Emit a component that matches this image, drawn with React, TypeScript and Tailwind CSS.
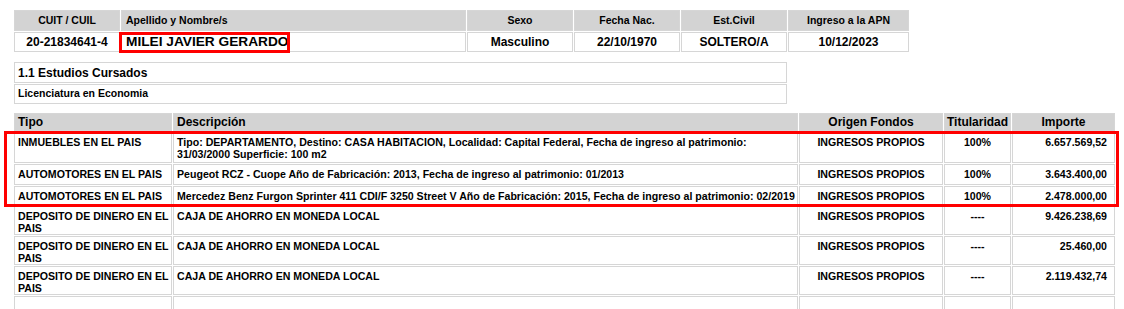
import React from "react";

const TH = "bg-[#d3d3d3] border border-[#d6d6d6] flex items-center";
const TD = "bg-white border border-[#d6d6d6]";

type Row = {
  tipo: React.ReactNode;
  desc: React.ReactNode;
  origen: string;
  tit: string;
  importe: string;
};

const rows: Row[] = [
  {
    tipo: "INMUEBLES EN EL PAIS",
    desc: (
      <>
        Tipo: DEPARTAMENTO, Destino: CASA HABITACION, Localidad: Capital Federal, Fecha de ingreso al patrimonio:
        <br />
        31/03/2000 Superficie: 100 m2
      </>
    ),
    origen: "INGRESOS PROPIOS",
    tit: "100%",
    importe: "6.657.569,52",
  },
  {
    tipo: "AUTOMOTORES EN EL PAIS",
    desc: "Peugeot RCZ - Cuope Año de Fabricación: 2013, Fecha de ingreso al patrimonio: 01/2013",
    origen: "INGRESOS PROPIOS",
    tit: "100%",
    importe: "3.643.400,00",
  },
  {
    tipo: "AUTOMOTORES EN EL PAIS",
    desc: "Mercedez Benz Furgon Sprinter 411 CDI/F 3250 Street V Año de Fabricación: 2015, Fecha de ingreso al patrimonio: 02/2019",
    origen: "INGRESOS PROPIOS",
    tit: "100%",
    importe: "2.478.000,00",
  },
  {
    tipo: (
      <>
        DEPOSITO DE DINERO EN EL
        <br />
        PAIS
      </>
    ),
    desc: "CAJA DE AHORRO EN MONEDA LOCAL",
    origen: "INGRESOS PROPIOS",
    tit: "----",
    importe: "9.426.238,69",
  },
  {
    tipo: (
      <>
        DEPOSITO DE DINERO EN EL
        <br />
        PAIS
      </>
    ),
    desc: "CAJA DE AHORRO EN MONEDA LOCAL",
    origen: "INGRESOS PROPIOS",
    tit: "----",
    importe: "25.460,00",
  },
  {
    tipo: (
      <>
        DEPOSITO DE DINERO EN EL
        <br />
        PAIS
      </>
    ),
    desc: "CAJA DE AHORRO EN MONEDA LOCAL",
    origen: "INGRESOS PROPIOS",
    tit: "----",
    importe: "2.119.432,74",
  },
];

export default function App() {
  const rc = "text-[10.6px] leading-[12px] pt-[3px] whitespace-nowrap";
  return (
    <div className="relative w-[1124px] h-[309px] overflow-hidden bg-white font-['Liberation_Sans',Arial,sans-serif] font-bold text-black">
      <div className="pl-[14px] pt-[10px] flex flex-col">
        {/* Top personal data table */}
        <div className="grid grid-cols-[106px_345px_106px_106px_106px_121px] grid-rows-[21px_20px] gap-[1px] w-[895px]">
          <div className={`${TH} justify-center text-[10.5px]`}>CUIT / CUIL</div>
          <div className={`${TH} pl-[4px] text-[10.5px]`}>Apellido y Nombre/s</div>
          <div className={`${TH} justify-center text-[10.5px]`}>Sexo</div>
          <div className={`${TH} justify-center text-[10.5px]`}>Fecha Nac.</div>
          <div className={`${TH} justify-center text-[10.5px]`}>Est.Civil</div>
          <div className={`${TH} justify-center text-[10.5px]`}>Ingreso a la APN</div>
          <div className={`${TD} flex items-center justify-center text-[12px]`}>20-21834641-4</div>
          <div className={`${TD} flex items-center pl-[4px] text-[13.7px]`}>MILEI JAVIER GERARDO</div>
          <div className={`${TD} flex items-center justify-center text-[12px]`}>Masculino</div>
          <div className={`${TD} flex items-center justify-center text-[12px]`}>22/10/1970</div>
          <div className={`${TD} flex items-center justify-center text-[12px]`}>SOLTERO/A</div>
          <div className={`${TD} flex items-center justify-center text-[12px]`}>10/12/2023</div>
        </div>

        {/* Studies */}
        <div className="mt-[10px] grid grid-rows-[21px_20px] gap-[1px] w-[773px]">
          <div className={`${TD} flex items-center pl-[3px] text-[12px]`}>1.1 Estudios Cursados</div>
          <div className={`${TD} flex items-center pl-[3px] pb-[1px] text-[10.5px]`}>Licenciatura en Economia</div>
        </div>

        {/* Assets table */}
        <div className="mt-[9px] grid grid-cols-[158px_625px_144px_67px_103px] grid-rows-[18px_31px_21px_19px_29px_29px_29px_20px] gap-[1px] w-[1101px]">
          <div className={`${TH} pl-[3px] text-[12px]`}>Tipo</div>
          <div className={`${TH} pl-[3px] text-[12px]`}>Descripción</div>
          <div className={`${TH} justify-center text-[12px]`}>Origen Fondos</div>
          <div className={`${TH} justify-center text-[12px]`}>Titularidad</div>
          <div className={`${TH} justify-center text-[12px]`}>Importe</div>
          {rows.map((r, i) => (
            <React.Fragment key={i}>
              <div className={`${TD} ${rc} pl-[3px]`}>{r.tipo}</div>
              <div className={`${TD} ${rc} pl-[3px]`}>{r.desc}</div>
              <div className={`${TD} ${rc} text-center`}>{r.origen}</div>
              <div className={`${TD} ${rc} text-center`}>{r.tit}</div>
              <div className={`${TD} ${rc} text-right pr-[7px]`}>{r.importe}</div>
            </React.Fragment>
          ))}
          <div className={TD}></div>
          <div className={TD}></div>
          <div className={TD}></div>
          <div className={TD}></div>
          <div className={TD}></div>
        </div>
      </div>

      {/* Red highlight boxes */}
      <div className="absolute left-[119px] top-[32px] w-[171px] h-[21px] border-[3px] border-[#ff0000]" />
      <div className="absolute left-[4px] top-[131px] w-[1115px] h-[76px] border-[3px] border-[#ff0000]" />
    </div>
  );
}
